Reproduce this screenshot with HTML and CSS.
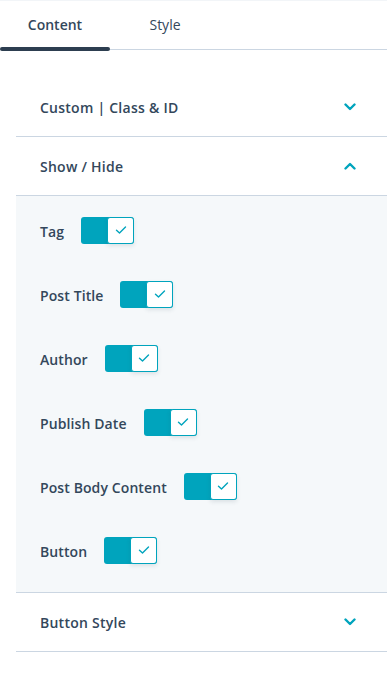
FILE: index.html
```html
<!DOCTYPE html>
<html lang="en">
<head>
    <meta charset="UTF-8">
    <meta name="viewport" content="width=device-width, initial-scale=1.0">
    <title>Module settings</title>
    <link rel="stylesheet" href="styles.css">
</head>
<body>
    <div class="panel">
        <div class="tabs">
            <div class="tab active">Content</div>
            <div class="tab">Style</div>
        </div>
        <div class="groups">
            <div class="group">
                <div class="group-head">
                    <span>Custom | Class &amp; ID</span>
                    <svg class="chev" viewBox="0 0 12 8" width="12" height="8"><path d="M1.5 1.5 6 6l4.5-4.5" /></svg>
                </div>
            </div>
            <div class="group open">
                <div class="group-head">
                    <span>Show / Hide</span>
                    <svg class="chev" viewBox="0 0 12 8" width="12" height="8"><path d="M1.5 6.5 6 2l4.5 4.5" /></svg>
                </div>
                <div class="group-body">
                    <label class="row">Tag <span class="toggle"><span class="knob"><svg viewBox="0 0 12 10" width="12" height="10"><path d="M1.5 5.2 4.5 8 10.5 2" /></svg></span></span></label>
                    <label class="row">Post Title <span class="toggle"><span class="knob"><svg viewBox="0 0 12 10" width="12" height="10"><path d="M1.5 5.2 4.5 8 10.5 2" /></svg></span></span></label>
                    <label class="row">Author <span class="toggle"><span class="knob"><svg viewBox="0 0 12 10" width="12" height="10"><path d="M1.5 5.2 4.5 8 10.5 2" /></svg></span></span></label>
                    <label class="row">Publish Date <span class="toggle"><span class="knob"><svg viewBox="0 0 12 10" width="12" height="10"><path d="M1.5 5.2 4.5 8 10.5 2" /></svg></span></span></label>
                    <label class="row">Post Body Content <span class="toggle"><span class="knob"><svg viewBox="0 0 12 10" width="12" height="10"><path d="M1.5 5.2 4.5 8 10.5 2" /></svg></span></span></label>
                    <label class="row">Button <span class="toggle"><span class="knob"><svg viewBox="0 0 12 10" width="12" height="10"><path d="M1.5 5.2 4.5 8 10.5 2" /></svg></span></span></label>
                </div>
            </div>
            <div class="group">
                <div class="group-head">
                    <span>Button Style</span>
                    <svg class="chev" viewBox="0 0 12 8" width="12" height="8"><path d="M1.5 1.5 6 6l4.5-4.5" /></svg>
                </div>
            </div>
        </div>
    </div>
</body>
</html>
```

FILE: styles.css
```css
body, html {
    margin: 0;
    padding: 0;
    background: #ffffff;
    color: #33475b;
    font-family: 'Open Sans', 'Liberation Sans', sans-serif;
}
.panel {
    width: 387px;
    border-top: 1px solid #f2f5f8;
}
.tabs {
    display: flex;
    height: 48px;
    border-bottom: 1px solid #cbd6e2;
}
.tab {
    width: 110px;
    display: flex;
    align-items: center;
    justify-content: center;
    font-size: 14px;
    padding-bottom: 2px;
    box-sizing: border-box;
    position: relative;
}
.tab.active {
    font-weight: 600;
}
.tab.active::after {
    content: '';
    position: absolute;
    left: 0;
    right: 0;
    bottom: -2px;
    height: 4px;
    border-radius: 2px;
    background: #2d3e50;
}
.groups {
    margin-top: 28px;
    margin-left: 16px;
}
.group {
    border-bottom: 1px solid #cbd6e2;
}
.group-head {
    height: 58px;
    display: flex;
    align-items: center;
    justify-content: space-between;
    padding: 0 31px 0 24px;
    font-size: 14px;
    font-weight: 600;
    letter-spacing: 0.25px;
}
.open .group-head {
    border-bottom: 1px solid #cbd6e2;
}
.chev path {
    fill: none;
    stroke: #00a4bd;
    stroke-width: 2.4;
    stroke-linecap: round;
    stroke-linejoin: round;
}
.group-body {
    background: #f5f8fa;
    padding: 21px 24px 27px;
    display: flex;
    flex-direction: column;
    gap: 36px;
}
.row {
    display: flex;
    align-items: center;
    gap: 17px;
    height: 28px;
    font-size: 14px;
    font-weight: 600;
    letter-spacing: 0.1px;
}
.toggle {
    display: flex;
    justify-content: flex-end;
    width: 53px;
    height: 27px;
    margin-top: -2px;
    box-sizing: border-box;
    background: #00a4bd;
    border-radius: 3px;
}
.knob {
    width: 27px;
    height: 27px;
    box-sizing: border-box;
    display: flex;
    align-items: center;
    justify-content: center;
    background: #ffffff;
    border: 1px solid #00a4bd;
    border-radius: 3px;
    box-shadow: 0 2px 4px rgba(45, 62, 80, 0.12);
}
.knob path {
    fill: none;
    stroke: #00a4bd;
    stroke-width: 1.4;
    stroke-linecap: round;
    stroke-linejoin: round;
}
```
